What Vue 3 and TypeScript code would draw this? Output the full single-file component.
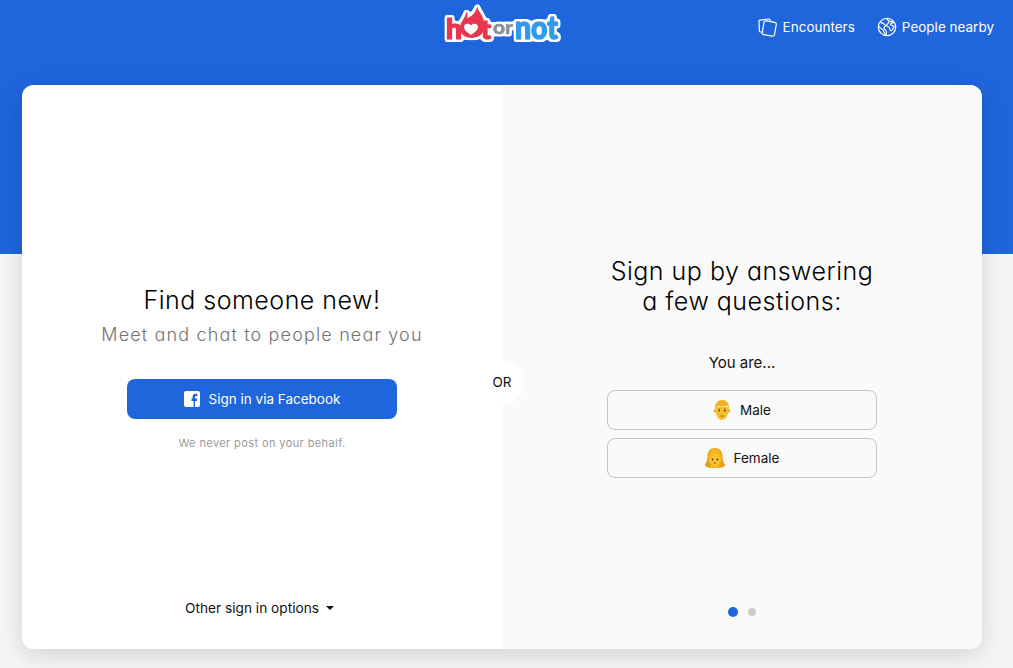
<script setup lang="ts">
const navItems: { label: string; icon: string }[] = [
  { label: 'Encounters', icon: 'cards' },
  { label: 'People nearby', icon: 'globe' },
]
</script>

<template>
  <div class="page">
    <header class="top">
      <div></div>
      <svg class="logo" viewBox="0 0 118 40" width="118" height="40" aria-label="hot or not">
        <defs>
          <filter id="logo-edge" x="-10%" y="-20%" width="120%" height="140%">
            <feMorphology in="SourceAlpha" operator="dilate" radius="2.400" result="fat" />
            <feGaussianBlur in="fat" stdDeviation="1.100" result="soft" />
            <feComponentTransfer in="soft" result="round">
              <feFuncA type="linear" slope="4" intercept="-1.200" />
            </feComponentTransfer>
            <feFlood flood-color="#fff" result="paper" />
            <feComposite in="paper" in2="round" operator="in" result="edge" />
            <feMerge>
              <feMergeNode in="edge" />
              <feMergeNode in="SourceGraphic" />
            </feMerge>
          </filter>
        </defs>
        <g filter="url(#logo-edge)">
          <path class="red" d="M35-.5c-1.500 5 2 8 4 12 3 6 3.500 10.500 2 14.500-2 6-7 8-13 8-8 0-12-6-11-12 .5-4 4-6 6.500-14.500 1 1.500 1.500 3.500 1 6.500 5-2 9.500-7.500 10.500-14.500z" />
          <text x="3" y="35" class="h red-t" textLength="16" lengthAdjust="spacingAndGlyphs">h</text>
          <text x="38" y="35" class="t red-t" textLength="10" lengthAdjust="spacingAndGlyphs">t</text>
          <text x="50" y="29.500" class="small grey-t" textLength="20" lengthAdjust="spacingAndGlyphs">or</text>
          <text x="72" y="35" class="n blue-t" textLength="43" lengthAdjust="spacingAndGlyphs">not</text>
        </g>
        <path class="white" d="M28 31c-4-3-7-5-7-8 0-3.500 5-4.500 7-1.500 2-3 7-2 7 1.500 0 3-3 5-7 8z" />
      </svg>
      <nav class="nav">
        <a v-for="item in navItems" :key="item.label" class="nav-item">
          <svg v-if="item.icon === 'cards'" class="nav-icon" viewBox="0 0 20 20" width="20" height="20">
            <path d="M5 14.800 2.700 15c-.7 0-1.200-.4-1.300-1L1 4.500c0-.7.400-1.200 1-1.300L10.500 2c.8-.1 1.300.3 1.500 1l.3 1" />
            <rect x="5" y="4.500" width="12.500" height="14" rx="1.800" transform="rotate(10 11 11.500)" />
          </svg>
          <svg v-else class="nav-icon" viewBox="0 0 20 20" width="20" height="20">
            <circle cx="10" cy="10" r="8.700" />
            <path d="M3.500 5c2 2 4.500 1.500 4.800 3.300S5.800 10.300 7.500 12s2.500 2 1.800 6C7 16.500 7 14.500 6 13S3.500 12 1.500 9" />
            <path d="M10.500 1.500c-.5 2 1 2.500 2.500 3s3-.3 3.800 1.200c-1.500.3-3-.2-3.300 1.300S16 8.500 17 9.500c0 2-1.500 3-2.500 4s-2-1-2-2.500-3-1-3-2.500S12 7 11.500 5" />
          </svg>
          <span>{{ item.label }}</span>
        </a>
      </nav>
    </header>

    <main class="card">
      <section class="pane pane-left">
        <div class="left-main">
          <h1 class="title">Find someone new!</h1>
          <p class="subtitle">Meet and chat to people near you</p>
          <button class="fb-btn">
            <svg class="fb-icon" viewBox="0 0 16 16" width="16" height="16">
              <rect width="16" height="16" rx="2" fill="#fff" />
              <path d="M11 16v-6h2l.3-2.400H11V6.200c0-.7.200-1.200 1.200-1.200h1.200V2.900c-.2 0-1-.1-1.800-.1-1.800 0-3 1.100-3 3.100v1.700H7.500V10h2.100v6z" fill="#1f65dc" />
            </svg>
            <span>Sign in via Facebook</span>
          </button>
          <p class="note">We never post on your behalf.</p>
        </div>
        <a class="other">Other sign in options <i class="caret"></i></a>
      </section>

      <section class="pane pane-right">
        <h2 class="title question">Sign up by answering<br />a few questions:</h2>
        <p class="you">You are...</p>
        <button class="gender">
          <svg class="emoji" viewBox="0 0 18 20" width="18" height="20">
            <circle cx="2.300" cy="10.800" r="1.600" fill="#eaa51a" /><circle cx="15.700" cy="10.800" r="1.600" fill="#eaa51a" />
            <path d="M2.300 7c0 8 2.700 13 6.700 13s6.700-5 6.700-13z" fill="#f9bf28" />
            <path d="M2 10.500C1.400 3 5 0 9.500 0 14 0 16.600 3.500 16 10.500c-.3-2.200-.8-3.800-1.500-5-1.500 1-7.500 1.500-10 .3-.9 1.200-2.100 2.700-2.500 4.700z" fill="#f2b01f" />
            <circle cx="6.200" cy="10.500" r=".9" fill="#4a2f0c" /><circle cx="11.800" cy="10.500" r=".9" fill="#4a2f0c" />
            <path d="M5.200 8.700h2M10.800 8.700h2" stroke="#a66f14" stroke-width=".6" />
            <path d="M7.500 16h3" stroke="#5b3a10" stroke-width=".8" />
          </svg>
          <span>Male</span>
        </button>
        <button class="gender">
          <svg class="emoji" viewBox="0 0 20 20" width="20" height="20">
            <path d="M10 0C4.500 0 2.500 4.500 2.500 8.500 2.500 12 1.500 14.500 0 16.500c0 2.500 3 3.500 10 3.500s10-1 10-3.500c-1.500-2-2.500-4.500-2.500-8C17.500 4.500 15.500 0 10 0z" fill="#e79d15" />
            <path d="M3.500 20c.5-3 2.500-4 6.500-4s6 1 6.500 4c-4 .4-9 .4-13 0z" fill="#f7b522" />
            <ellipse cx="10" cy="11" rx="6.300" ry="6.600" fill="#fcc52f" />
            <path d="M3.600 11.500C3 5 6.500 1 10.500 1c4 .3 6.400 4.500 5.900 10.500-1.200-2.700-3.700-4.500-6.400-6.300-.8 2.600-4 3.800-6.400 6.300z" fill="#f5b722" />
            <circle cx="7.600" cy="11.500" r=".9" fill="#4a2f0c" /><circle cx="12.400" cy="11.500" r=".9" fill="#4a2f0c" />
            <path d="M8.800 15h2.400" stroke="#5b3a10" stroke-width=".8" />
          </svg>
          <span>Female</span>
        </button>
        <div class="dots"><i class="dot active"></i><i class="dot"></i></div>
      </section>

      <div class="or">OR</div>
    </main>
  </div>
</template>

<style>
html, body { margin: 0; background: #f5f5f5; }
</style>

<style scoped>
.page {
  height: 668px;
  overflow: hidden;
  background: linear-gradient(#1f65dc 254px, #f5f5f5 254px);
  font-family: Inter, "Liberation Sans", sans-serif;
  color: #111;
}
.top {
  display: grid;
  grid-template-columns: 1fr 118px 1fr;
  align-items: start;
  padding: 4px 19px 0 10px;
  height: 85px;
  box-sizing: border-box;
}
.logo { display: block; overflow: visible; }
.h, .t, .n, .small { font-family: Lato, sans-serif; font-weight: 900; }
.h { font-size: 29px; }
.t { font-size: 27px; }
.n { font-size: 33px; }
.small { font-size: 19px; }
.red-t, .blue-t { stroke-width: 1.600; stroke-linejoin: round; }
.grey-t { stroke-width: .6; stroke-linejoin: round; }
.red { fill: #e9364f; }
.white { fill: #fff; }
.red-t { fill: #e9364f; stroke: #e9364f; }
.grey-t { fill: #8b9099; stroke: #8b9099; }
.blue-t { fill: #2f9bee; stroke: #2f9bee; }
.nav {
  display: flex;
  justify-content: flex-end;
  gap: 22px;
  padding-top: 13px;
  color: #fff;
  font-size: 13.500px;
  line-height: 20px;
}
.nav-item { display: flex; align-items: center; gap: 5px; }
.nav-icon { fill: none; stroke: #fff; stroke-width: 1.200; stroke-linejoin: round; stroke-linecap: round; }
.card {
  position: relative;
  display: grid;
  grid-template-columns: 1fr 1fr;
  height: 564px;
  margin: 0 31px 0 22px;
  border-radius: 12px;
  box-shadow: 0 6px 24px rgba(0, 0, 0, .14);
  background: #fff;
}
.pane { display: flex; flex-direction: column; align-items: center; box-sizing: border-box; }
.pane-left { background: #fff; border-radius: 12px 0 0 12px; padding-top: 200px; }
.pane-right { background: #fafafa; border-radius: 0 12px 12px 0; padding-top: 171px; }
.left-main { display: flex; flex-direction: column; align-items: center; flex: 1; }
.title {
  margin: 0;
  font: 350 25px/30px Inter, sans-serif;
  font-feature-settings: "cv11";
  letter-spacing: .5px;
  text-align: center;
  color: #000;
}
.subtitle {
  margin: 8px 0 0;
  font: 350 18px/24px Inter, sans-serif;
  font-feature-settings: "cv11";
  letter-spacing: 1.150px;
  color: #737373;
}
.fb-btn {
  display: flex;
  align-items: center;
  justify-content: center;
  gap: 9px;
  width: 270px;
  height: 40px;
  margin-top: 32px;
  border: 0;
  border-radius: 8px;
  background: #1f65dc;
  color: #fff;
  font: 400 13.500px Inter, sans-serif;
}
.note { margin: 16px 0 0; font-size: 11px; line-height: 16px; letter-spacing: .4px; color: #9a9a9a; }
.other {
  display: flex;
  align-items: center;
  gap: 7px;
  height: 20px;
  margin: 0 5px 31px 0;
  font-size: 13.700px;
}
.caret { width: 0; height: 0; border: 4px solid transparent; border-top-color: #111; border-bottom: 0; }
.you { margin: 35px 0 0; font-size: 15px; line-height: 24px; color: #111; }
.gender {
  display: flex;
  align-items: center;
  justify-content: center;
  gap: 9px;
  width: 270px;
  height: 40px;
  margin-top: 8px;
  border: 1px solid #c4c4c4;
  border-radius: 8px;
  background: transparent;
  color: #111;
  font: 400 13.500px Inter, sans-serif;
  box-sizing: border-box;
}
.you + .gender { margin-top: 15px; }
.emoji { display: block; }
.dots { display: flex; align-items: center; gap: 10px; margin-top: auto; margin-bottom: 32px; height: 10px; }
.dot { width: 8px; height: 8px; border-radius: 50%; background: #ccc; }
.dot.active { width: 10px; height: 10px; background: #1f65dc; }
.or {
  position: absolute;
  left: 50%;
  top: 275px;
  width: 44px;
  height: 44px;
  margin-left: -22px;
  border-radius: 50%;
  background: #fff;
  display: flex;
  align-items: center;
  justify-content: center;
  font-size: 13.500px;
}
</style>
